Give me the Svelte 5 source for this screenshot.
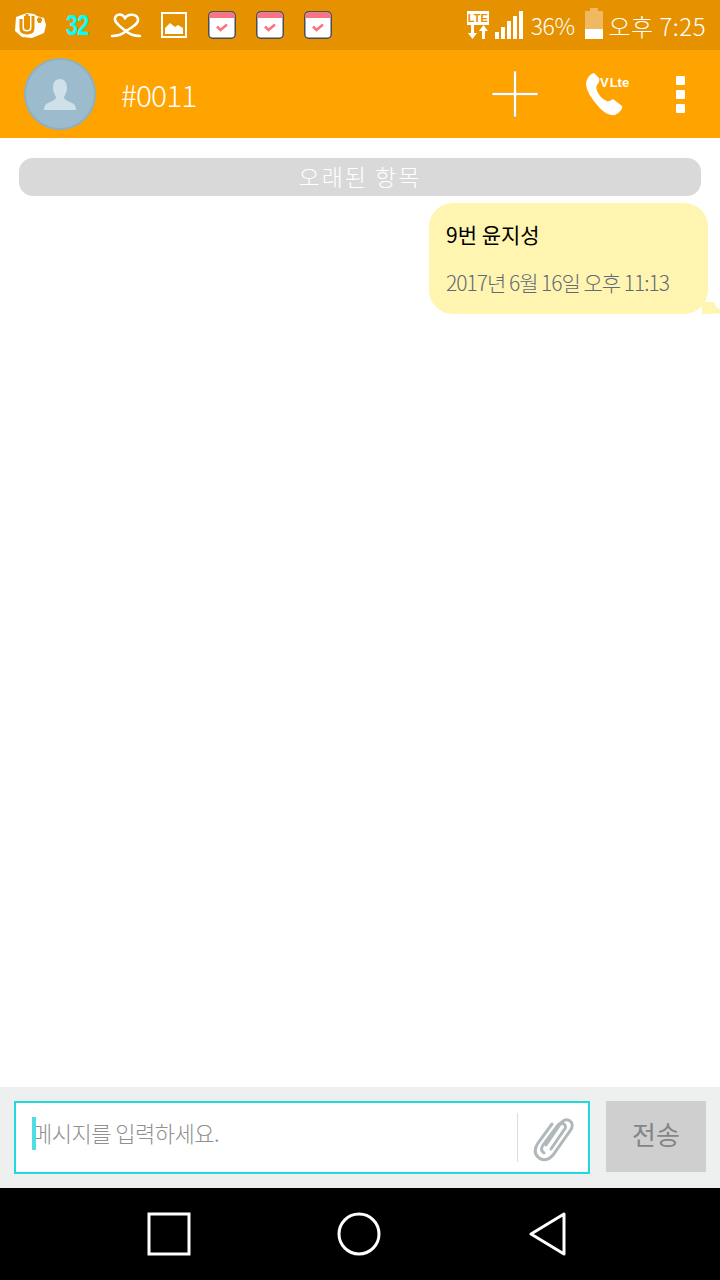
<script lang="ts">
	const calendars = [0, 1, 2];
	const signal = [
		{ h: 7 },
		{ h: 12 },
		{ h: 18 },
		{ h: 23 },
		{ h: 28 }
	];
</script>

<div class="screen">
	<div class="status-bar">
		<div class="status-left">
			<svg class="ic-uplus" width="34" height="28" viewBox="0 0 34 28" fill="none">
				<path d="M3 6 L14 2 L21 3 L24 5 L31 7 L33 14 L31 22 L19 27 L9 26 L2 20 Z" fill="#fff" />
				<path d="M8 8 V17 Q8 22 14 22 Q20 22 20 17 V5 M24 9 H29 M26.500 6.500 V12" stroke="#e59100" stroke-width="3" />
				<path d="M11 5 V16 Q11 19 14 19 Q17 19 17 16 V5 Z" fill="#e59100" />
				<path d="M12.500 3 V16 Q12.500 18 14 18 Q15.500 18 15.500 16 V3 Z" fill="#e59100" />
			</svg>
			<span class="count">32</span>
			<svg class="ic-heart" width="32" height="26" viewBox="0 0 32 26" fill="none" stroke="#fff" stroke-width="2.500" stroke-linecap="round">
				<path d="M2 24 C8 24 13 22 16 19 C11 15 4 11 5 6 C6 2 12 1 15 6 C18 1 27 2 28 7 C29 12 21 16 16 19 C19 22 24 24 30 24" />
			</svg>
			<svg class="ic-pic" width="26" height="26" viewBox="0 0 26 26">
				<rect x="1" y="1" width="24" height="24" fill="none" stroke="#fff" stroke-width="2" />
				<path d="M4 22 V16 L9 11 L14 15 L17 13 L22 16 V22 Z" fill="#fff" />
			</svg>
			{#each calendars as c}
				<svg class="ic-cal" width="28" height="28" viewBox="0 0 28 28">
					<rect x="0.750" y="0.750" width="26.500" height="26.500" rx="4" fill="#fff" stroke="#4c4c55" stroke-width="1.500" />
					<path d="M1.500 7 V5 Q1.500 1.500 5 1.500 H23 Q26.500 1.500 26.500 5 V7 Z" fill="#fb7280" />
					<path d="M9 15.500 L12.500 19 L19 13.500" fill="none" stroke="#fb7280" stroke-width="2.500" />
				</svg>
			{/each}
		</div>
		<div class="status-right">
			<div class="lte-wrap">
				<span class="lte">LTE</span>
				<svg width="22" height="14" viewBox="0 0 22 14" fill="#fff">
					<path d="M4 0 H7 V8 H10 L5.500 14 L1 8 H4 Z" />
					<path d="M15 14 H18 V6 H21 L16.500 0 L12 6 H15 Z" />
				</svg>
			</div>
			<div class="signal">
				{#each signal as s}
					<i style="height: {s.h}px"></i>
				{/each}
			</div>
			<span class="pct">36%</span>
			<div class="battery"><i></i></div>
			<span class="clock">오후 7:25</span>
		</div>
	</div>

	<header class="app-bar">
		<div class="avatar">
			<svg width="36" height="36" viewBox="0 0 36 36" fill="#d0e0e9">
				<path d="M18 3 C23 3 25 7 25 12 C25 16 23 19 22 21 C22 24 26 25 30 27 C33 28 34 31 34 34 H2 C2 31 3 28 6 27 C10 25 14 24 14 21 C13 19 11 16 11 12 C11 7 13 3 18 3 Z" />
			</svg>
		</div>
		<span class="title">#0011</span>
		<div class="actions">
			<svg class="ic-plus" width="48" height="48" viewBox="0 0 48 48" fill="#fff" stroke="#d98a00" stroke-width="0.500">
				<path d="M22.500 1 H25.500 V22.500 H47 V25.500 H25.500 V47 H22.500 V25.500 H1 V22.500 H22.500 Z" />
			</svg>
			<div class="call">
				<svg width="40" height="44" viewBox="0 0 40 44" fill="#fff">
					<path d="M9 0 L14 5 C15 7 14 10 12 12 C11 14 11 16 13 20 C16 25 19 27 22 28 C24 29 26 27 28 26 L37 33 C38 35 35 40 30 42 C25 43 19 40 13 33 C6 25 1 17 1 10 C2 5 5 1 9 0 Z" />
				</svg>
				<span class="vlte"><em>V</em>Lte</span>
			</div>
			<div class="dots">
				<i></i>
				<i></i>
				<i></i>
			</div>
		</div>
	</header>

	<main class="thread">
		<div class="divider">오래된 항목</div>
		<div class="bubble">
			<p class="msg">9번 윤지성</p>
			<p class="time">2017년 6월 16일 오후 11:13</p>
			<svg class="tail" width="26" height="12" viewBox="0 0 26 12">
				<path d="M0 0 H12 C13 5 18 9 26 9 C20 12 12 12 0 12 Z" fill="#fff5b0" />
			</svg>
		</div>
	</main>

	<div class="composer">
		<div class="input-box">
			<span class="caret"></span>
			<span class="placeholder">메시지를 입력하세요.</span>
			<span class="sep"></span>
			<svg class="clip" width="42" height="46" viewBox="0 0 42 46" fill="none" stroke="#b0b8bc" stroke-width="3" stroke-linecap="round">
				<path d="M14 29 L29 7 C32 3 36 3 38 5 C41 7 41 11 38 15 L21 39 C17 44 11 45 7 42 C2 38 2 33 6 27 L20 8" />
				<path d="M12 37 C9 35 9 32 11 29 L26 9 C28 7 30 7 32 8 C34 10 34 12 32 14 L19 33" />
			</svg>
		</div>
		<button class="send">전송</button>
	</div>

	<nav class="nav-bar">
		<svg width="44" height="44" viewBox="0 0 44 44" fill="none" stroke="#fff" stroke-width="3">
			<rect x="2" y="2" width="40" height="40" />
		</svg>
		<svg width="44" height="44" viewBox="0 0 44 44" fill="none" stroke="#fff" stroke-width="3">
			<circle cx="22" cy="22" r="20" />
		</svg>
		<svg width="44" height="44" viewBox="0 0 44 44" fill="none" stroke="#fff" stroke-width="3" stroke-linejoin="round">
			<path d="M37 2 V42 L4 22 Z" />
		</svg>
	</nav>
</div>

<style>
	:global(body) {
		margin: 0;
		background: #fff;
	}

	.screen {
		width: 720px;
		height: 1280px;
		display: flex;
		flex-direction: column;
		overflow: hidden;
		font-family: "Noto Sans CJK KR", "Noto Sans", sans-serif;
	}

	.status-bar {
		height: 50px;
		flex: none;
		display: flex;
		justify-content: space-between;
		align-items: center;
		padding: 0 14px 0 13px;
		background: #e59100;
		color: #fff;
	}

	.status-left {
		display: flex;
		align-items: center;
	}

	.ic-uplus {
		margin-right: 19px;
	}

	.count {
		width: 24px;
		margin-right: 20px;
		font-family: "Liberation Sans", sans-serif;
		font-size: 30px;
		font-weight: 700;
		line-height: 30px;
		color: #0ff;
		transform: scaleX(0.72);
		transform-origin: left center;
		letter-spacing: -1px;
	}

	.ic-heart {
		margin-right: 19px;
	}

	.ic-pic {
		margin-right: 21px;
	}

	.ic-cal {
		margin-right: 20px;
	}

	.status-right {
		display: flex;
		align-items: center;
	}

	.lte-wrap {
		width: 22px;
		display: flex;
		flex-direction: column;
		align-items: center;
		margin-right: 6px;
	}

	.lte {
		width: 22px;
		height: 14px;
		background: #fff;
		color: #e59100;
		font-family: "Liberation Sans", sans-serif;
		font-size: 11px;
		font-weight: 700;
		line-height: 14px;
		text-align: center;
	}

	.signal {
		display: flex;
		align-items: flex-end;
		gap: 2px;
		margin-right: 8px;
		height: 28px;
	}

	.signal i {
		width: 4px;
		background: #fff;
	}

	.pct {
		font-size: 23px;
		font-weight: 300;
		margin-right: 10px;
		letter-spacing: -0.500px;
	}

	.battery {
		position: relative;
		width: 18px;
		height: 28px;
		background: #f0b860;
		margin-right: 6px;
	}

	.battery::before {
		content: "";
		position: absolute;
		top: -3px;
		left: 5px;
		width: 8px;
		height: 3px;
		background: #f0b860;
	}

	.battery i {
		position: absolute;
		left: 0;
		right: 0;
		bottom: 0;
		height: 10px;
		background: #fff;
	}

	.clock {
		font-size: 24px;
		font-weight: 300;
		letter-spacing: 0.500px;
	}

	.app-bar {
		height: 88px;
		flex: none;
		display: flex;
		align-items: center;
		padding-left: 24px;
		background: #ffa300;
		color: #fff;
	}

	.avatar {
		width: 68px;
		height: 68px;
		margin-top: -1px;
		display: flex;
		align-items: center;
		justify-content: center;
		border: 2px solid #8fb0c0;
		border-radius: 50%;
		background: #9cbccd;
	}

	.title {
		margin-left: 25px;
		font-size: 30px;
		font-weight: 300;
		letter-spacing: -1px;
	}

	.actions {
		display: flex;
		align-items: center;
		margin-left: auto;
	}

	.ic-plus {
		margin-right: 46px;
	}

	.call {
		position: relative;
		width: 46px;
		height: 46px;
		margin-right: 45px;
	}

	.call svg {
		position: absolute;
		left: 0;
		top: 2px;
	}

	.vlte {
		position: absolute;
		left: 15px;
		top: 4px;
		font-family: "Liberation Sans", sans-serif;
		font-size: 13px;
		font-weight: 700;
		white-space: nowrap;
	}

	.vlte em {
		font-style: normal;
		margin-right: 1px;
	}

	.dots {
		display: flex;
		flex-direction: column;
		gap: 5px;
		margin-right: 35px;
	}

	.dots i {
		width: 9px;
		height: 9px;
		border-radius: 1px;
		background: #fff;
	}

	.thread {
		flex: 1;
		display: flex;
		flex-direction: column;
		padding: 20px 19px 0;
		background: #fff;
	}

	.divider {
		height: 38px;
		border-radius: 14px;
		background: #d9d9d9;
		color: #fff;
		font-size: 23px;
		font-weight: 300;
		line-height: 36px;
		text-align: center;
		letter-spacing: 2px;
	}

	.bubble {
		position: relative;
		align-self: flex-end;
		box-sizing: border-box;
		width: 279px;
		height: 111px;
		margin: 7px -7px 0 0;
		padding: 14px 17px;
		border-radius: 24px;
		background: #fff5b0;
	}

	.msg,
	.time {
		margin: 0;
		white-space: nowrap;
	}

	.msg {
		font-size: 21px;
		line-height: 34px;
		color: #000;
	}

	.time {
		margin-top: 14px;
		font-size: 21px;
		font-weight: 300;
		line-height: 34px;
		letter-spacing: -1px;
		color: #5f6b76;
	}

	.tail {
		position: absolute;
		right: -20px;
		bottom: 0;
	}

	.composer {
		height: 101px;
		flex: none;
		box-sizing: border-box;
		display: flex;
		align-items: flex-start;
		gap: 16px;
		padding: 14px 14px 0;
		background: #eef0ef;
	}

	.input-box {
		position: relative;
		box-sizing: border-box;
		width: 576px;
		height: 73px;
		display: flex;
		align-items: flex-start;
		border: 2px solid #1fd9dc;
		background: #fff;
	}

	.caret {
		position: absolute;
		left: 16px;
		top: 14px;
		width: 4px;
		height: 33px;
		background: #4fdfe2;
	}

	.placeholder {
		margin: 10px 0 0 16px;
		font-size: 22px;
		font-weight: 300;
		line-height: 38px;
		color: #909090;
		letter-spacing: -0.500px;
	}

	.sep {
		position: absolute;
		right: 70px;
		top: 10px;
		width: 1px;
		height: 49px;
		background: #dcdcdc;
	}

	.clip {
		position: absolute;
		right: 14px;
		top: 13px;
	}

	.send {
		width: 100px;
		height: 71px;
		padding: 0 0 6px;
		border: none;
		background: #cfcfcf;
		color: #858585;
		font-family: inherit;
		font-size: 26px;
		font-weight: 400;
	}

	.nav-bar {
		height: 92px;
		flex: none;
		display: flex;
		align-items: center;
		justify-content: space-between;
		padding: 0 149px 0 147px;
		background: #000;
	}
</style>
